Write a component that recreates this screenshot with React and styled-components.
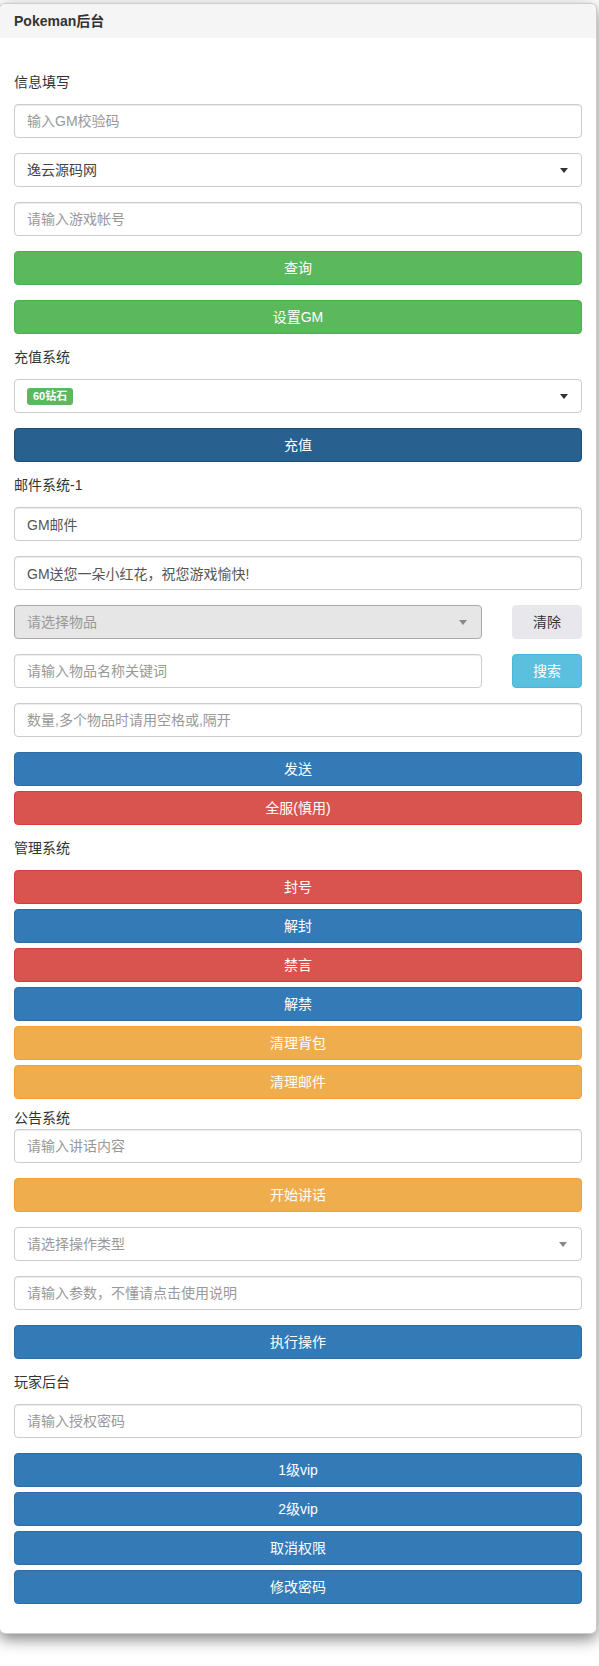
import React from "react";
import styled, { createGlobalStyle } from "styled-components";

const GlobalStyle = createGlobalStyle`
  html, body {
    margin: 0;
    padding: 0;
    background: #ffffff;
  }
  body {
    font-family: "Liberation Sans", "Noto Sans CJK SC", sans-serif;
    font-size: 14px;
    line-height: 20px;
    color: #333333;
  }
  * {
    box-sizing: border-box;
  }
`;

const colors = {
  success: { bg: "#5cb85c", border: "#4cae4c", text: "#ffffff" },
  primary: { bg: "#337ab7", border: "#2e6da4", text: "#ffffff" },
  active: { bg: "#286090", border: "#204d74", text: "#ffffff" },
  danger: { bg: "#d9534f", border: "#d43f3a", text: "#ffffff" },
  warning: { bg: "#f0ad4e", border: "#eea236", text: "#ffffff" },
  info: { bg: "#5bc0de", border: "#46b8da", text: "#ffffff" },
  light: { bg: "#e8e8ec", border: "#e8e8ec", text: "#333333" },
};

function App() {
  return (
    <>
      <GlobalStyle />
      <Page>
        <Card>
          <CardHeader>Pokeman后台</CardHeader>
          <CardBody>
            <SectionLabel>信息填写</SectionLabel>
            <Field>
              <TextInput placeholder="输入GM校验码" />
            </Field>
            <Field>
              <Select $arrow="dark">
                <SelectText>逸云源码网</SelectText>
              </Select>
            </Field>
            <Field>
              <TextInput placeholder="请输入游戏帐号" />
            </Field>
            <Field>
              <Button $variant="success">查询</Button>
            </Field>
            <Field>
              <Button $variant="success">设置GM</Button>
            </Field>

            <SectionLabel>充值系统</SectionLabel>
            <Field>
              <Select $arrow="dark">
                <Badge>60钻石</Badge>
              </Select>
            </Field>
            <Field>
              <Button $variant="active">充值</Button>
            </Field>

            <SectionLabel>邮件系统-1</SectionLabel>
            <Field>
              <TextInput defaultValue="GM邮件" />
            </Field>
            <Field>
              <TextInput defaultValue="GM送您一朵小红花，祝您游戏愉快!" />
            </Field>
            <Field>
              <InlineRow>
                <Select $disabled>
                  <SelectText $placeholder>请选择物品</SelectText>
                </Select>
                <Button $variant="light">清除</Button>
              </InlineRow>
            </Field>
            <Field>
              <InlineRow>
                <TextInput placeholder="请输入物品名称关键词" />
                <Button $variant="info">搜索</Button>
              </InlineRow>
            </Field>
            <Field>
              <TextInput placeholder="数量,多个物品时请用空格或,隔开" />
            </Field>
            <ButtonStack>
              <Button $variant="primary">发送</Button>
              <Button $variant="danger">全服(慎用)</Button>
            </ButtonStack>

            <SectionLabel>管理系统</SectionLabel>
            <ButtonStack>
              <Button $variant="danger">封号</Button>
              <Button $variant="primary">解封</Button>
              <Button $variant="danger">禁言</Button>
              <Button $variant="primary">解禁</Button>
              <Button $variant="warning">清理背包</Button>
              <Button $variant="warning">清理邮件</Button>
            </ButtonStack>

            <SectionLabel $tight>公告系统</SectionLabel>
            <Field>
              <TextInput placeholder="请输入讲话内容" />
            </Field>
            <Field>
              <Button $variant="warning">开始讲话</Button>
            </Field>
            <Field>
              <Select>
                <SelectText $placeholder>请选择操作类型</SelectText>
              </Select>
            </Field>
            <Field>
              <TextInput placeholder="请输入参数，不懂请点击使用说明" />
            </Field>
            <Field>
              <Button $variant="primary">执行操作</Button>
            </Field>

            <SectionLabel>玩家后台</SectionLabel>
            <Field>
              <TextInput placeholder="请输入授权密码" />
            </Field>
            <ButtonStack $last>
              <Button $variant="primary">1级vip</Button>
              <Button $variant="primary">2级vip</Button>
              <Button $variant="primary">取消权限</Button>
              <Button $variant="primary">修改密码</Button>
            </ButtonStack>
          </CardBody>
        </Card>
      </Page>
    </>
  );
}

const Page = styled.div`
  min-height: 1666px;
  padding-top: 3px;
`;

const Card = styled.div`
  width: 598px;
  margin-left: -1px;
  background: #ffffff;
  border: 1px solid rgba(0, 0, 0, 0.2);
  border-radius: 6px;
  box-shadow: 0 5px 15px rgba(0, 0, 0, 0.5);
`;

const CardHeader = styled.div`
  height: 34px;
  line-height: 34px;
  padding-left: 14px;
  background: #f5f5f5;
  border-radius: 5px 5px 0 0;
  font-weight: 700;
  font-size: 14px;
  color: #333333;
`;

const CardBody = styled.div`
  padding: 36px 14px 29px 14px;
`;

const SectionLabel = styled.div`
  height: 20px;
  line-height: 20px;
  margin-top: ${(props) => (props.$tight ? "-6px" : "-2px")};
  margin-bottom: ${(props) => (props.$tight ? "1px" : "12px")};
  font-size: 14px;
  color: #333333;
`;

const Field = styled.div`
  margin-bottom: 15px;
`;

const InlineRow = styled.div`
  display: grid;
  grid-template-columns: 1fr 70px;
  column-gap: 30px;
`;

const ButtonStack = styled.div`
  display: flex;
  flex-direction: column;
  gap: 5px;
  margin-bottom: ${(props) => (props.$last ? "0" : "15px")};
`;

const TextInput = styled.input`
  display: block;
  width: 100%;
  height: 34px;
  padding: 6px 12px;
  font-family: inherit;
  font-size: 14px;
  line-height: 20px;
  color: #555555;
  background: #ffffff;
  border: 1px solid #cccccc;
  border-radius: 4px;
  box-shadow: inset 0 1px 1px rgba(0, 0, 0, 0.075);
  outline: none;

  &::placeholder {
    color: #999999;
  }
`;

const Select = styled.div`
  position: relative;
  display: flex;
  align-items: center;
  height: 34px;
  padding: 0 30px 0 12px;
  background: ${(props) => (props.$disabled ? "#e6e6e6" : "#ffffff")};
  border: 1px solid ${(props) => (props.$disabled ? "#aaaaaa" : "#cccccc")};
  border-radius: 4px;

  &::after {
    content: "";
    position: absolute;
    right: ${(props) => (props.$arrow === "dark" ? "13px" : "14px")};
    top: 50%;
    margin-top: -2px;
    border-style: solid;
    border-width: 5px 4px 0 4px;
    border-color: ${(props) =>
        props.$arrow === "dark" ? "#333333" : "#888888"}
      transparent transparent transparent;
  }
`;

const SelectText = styled.span`
  font-size: 14px;
  line-height: 20px;
  color: ${(props) => (props.$placeholder ? "#999999" : "#444444")};
`;

const Badge = styled.span`
  display: inline-block;
  height: 17px;
  padding: 0 6px;
  line-height: 17px;
  font-size: 11px;
  font-weight: 700;
  color: #ffffff;
  background: #5cb85c;
  border-radius: 3px;
`;

const Button = styled.button`
  display: block;
  width: 100%;
  height: 34px;
  padding: 6px 12px;
  font-family: inherit;
  font-size: 14px;
  line-height: 20px;
  text-align: center;
  color: ${(props) => colors[props.$variant].text};
  background: ${(props) => colors[props.$variant].bg};
  border: 1px solid ${(props) => colors[props.$variant].border};
  border-radius: 4px;
  cursor: pointer;
`;

export default App;
